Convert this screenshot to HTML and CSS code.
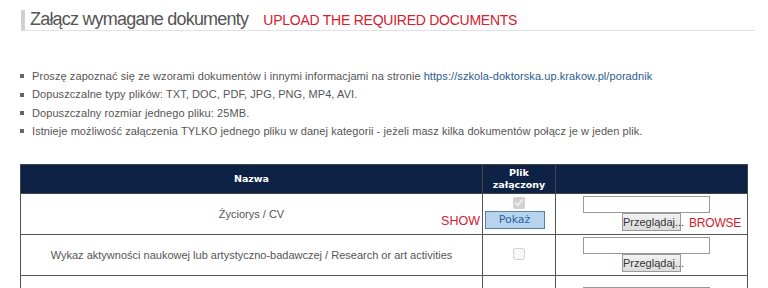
FILE: index.html
```html
<!DOCTYPE html>
<html lang="pl">
  <head>
    <meta charset="UTF-8" />
    <title>Załącz wymagane dokumenty</title>
    <link rel="stylesheet" href="styles.css">
  </head>
  <body>
    <div class="page">
      <h2 class="section-title">
        Załącz wymagane dokumenty
        <span class="note note-title">UPLOAD THE REQUIRED DOCUMENTS</span>
      </h2>

      <ul class="rules">
        <li>Proszę zapoznać się ze wzorami dokumentów i innymi informacjami na stronie <a href="#">https://szkola-doktorska.up.krakow.pl/poradnik</a></li>
        <li>Dopuszczalne typy plików: TXT, DOC, PDF, JPG, PNG, MP4, AVI.</li>
        <li>Dopuszczalny rozmiar jednego pliku: 25MB.</li>
        <li>Istnieje możliwość załączenia TYLKO jednego pliku w danej kategorii - jeżeli masz kilka dokumentów połącz je w jeden plik.</li>
      </ul>

      <!-- Lista dokumentow -->
      <table class="docs">
        <thead>
          <tr>
            <th class="col-name">Nazwa</th>
            <th class="col-att">Plik<br />załączony</th>
            <th class="col-file"></th>
          </tr>
        </thead>
        <tbody>
          <tr>
            <td class="name">
              Życiorys / CV
              <span class="note note-show">SHOW</span>
            </td>
            <td class="att">
              <input type="checkbox" checked disabled /><br />
              <button class="show-btn" type="button">Pokaż</button>
            </td>
            <td class="file">
              <span class="file-path"></span><br />
              <button class="browse-btn" type="button">Przeglądaj...</button>
              <span class="note note-browse">BROWSE</span>
            </td>
          </tr>
          <tr>
            <td class="name">Wykaz aktywności naukowej lub artystyczno-badawczej / Research or art activities</td>
            <td class="att">
              <input type="checkbox" disabled />
            </td>
            <td class="file">
              <span class="file-path"></span><br />
              <button class="browse-btn" type="button">Przeglądaj...</button>
            </td>
          </tr>
          <tr>
            <td class="name"></td>
            <td class="att"></td>
            <td class="file">
              <span class="file-path"></span>
            </td>
          </tr>
        </tbody>
      </table>
    </div>
  </body>
</html>
```

FILE: styles.css
```css
body {
  margin: 0;
  font-family: "Liberation Sans", Arial, sans-serif;
  color: #555;
  background: #fff;
}
.page {
  padding: 10px 13px 0 20px;
}
.section-title {
  margin: 0 0 0 1px;
  padding: 0 0 0 5px;
  border-left: 4px solid #d0d0d0;
  border-bottom: 1px solid #e2e2e2;
  font-size: 18px;
  font-weight: normal;
  line-height: 19px;
  letter-spacing: -0.8px;
  color: #555;
}
.note {
  color: #d4202c;
  font-size: 13px;
  font-weight: normal;
  letter-spacing: 0;
}
.note-title {
  margin-left: 11px;
  font-size: 14px;
  letter-spacing: -0.25px;
}
.rules {
  list-style: none;
  margin: 36px 0 0;
  padding: 0;
  font-size: 11px;
  line-height: 18.4px;
  letter-spacing: 0.08px;
}
.rules li {
  display: flex;
  align-items: center;
}
.rules li::before {
  content: "";
  width: 4px;
  height: 4px;
  margin-right: 8px;
  background: #666;
  flex: none;
}
.rules a {
  color: #2b5c91;
  text-decoration: none;
  margin-left: 3px;
}
.docs {
  margin-top: 23px;
  width: 728px;
  border-collapse: collapse;
  font-size: 11px;
}
.docs th {
  background: #0e2246;
  color: #fff;
  font-family: "DejaVu Sans", Verdana, sans-serif;
  font-size: 9.5px;
  line-height: 12px;
  height: 28px;
  padding: 0;
  border: 1px solid #444;
  text-align: center;
}
.col-name {
  width: 461px;
}
.col-att {
  width: 72px;
}
.docs td {
  border: 1px solid #555;
  text-align: center;
  vertical-align: middle;
  padding: 0;
}
.docs tbody tr {
  height: 41px;
}
.name {
  position: relative;
}
.note-show {
  position: absolute;
  right: 2px;
  top: 20px;
  font-size: 12.5px;
}
.att input {
  margin: 0 0 1px;
  width: 12px;
  height: 12px;
}
.show-btn {
  width: 60px;
  height: 18px;
  padding: 0;
  margin: 0 0 2px -9px;
  border: 1px solid #5a7fa8;
  background: #b7d3ee;
  color: #2a63a0;
  font-family: "DejaVu Sans", Verdana, sans-serif;
  font-size: 11px;
}
.file {
  position: relative;
}
.file-path {
  display: inline-block;
  width: 125px;
  height: 15px;
  margin: 0 0 0 -11px;
  border: 1px solid #999;
  vertical-align: top;
}
.browse-btn {
  width: 59px;
  height: 18px;
  padding: 0;
  margin-top: 0;
  border: 1px solid #9a9a9a;
  background: linear-gradient(#f2f2f2, #dcdcdc);
  color: #333;
  font-family: "Liberation Sans", Arial, sans-serif;
  font-size: 11px;
}
.note-browse {
  position: absolute;
  left: 133px;
  top: 22px;
  font-size: 12px;
  letter-spacing: -0.2px;
}
```
